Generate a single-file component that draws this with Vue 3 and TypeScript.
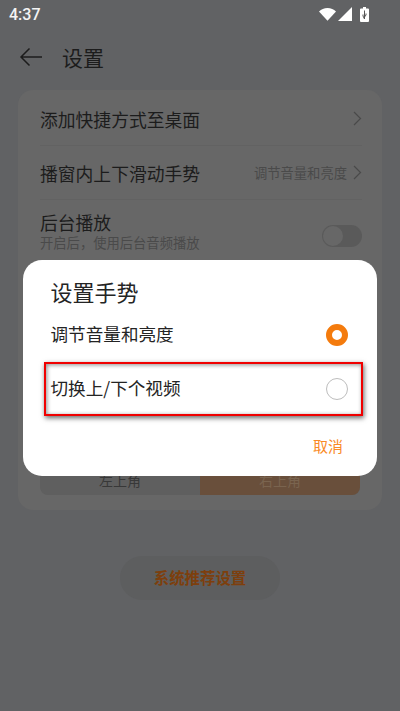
<script setup lang="ts">
const rows = [
  { title: '添加快捷方式至桌面', value: '' },
  { title: '播窗内上下滑动手势', value: '调节音量和亮度' },
]
</script>

<template>
  <div class="page">
    <div class="status">
      <span class="time">4:37</span>
      <div class="status-icons">
        <svg width="17" height="13" viewBox="0 0 17 13"><path d="M0 3.6C2.2 1.3 5.2 0 8.5 0S14.8 1.3 17 3.6L8.5 12.8Z" fill="#fff" /></svg>
        <svg width="14" height="14" viewBox="0 0 14 14"><path d="M14 0V14H0Z" fill="#fff" /></svg>
        <svg class="battery" width="9" height="15" viewBox="0 0 9 15">
          <path d="M3 0H6V1.4H8A1 1 0 0 1 9 2.4V14A1 1 0 0 1 8 15H1A1 1 0 0 1 0 14V2.4A1 1 0 0 1 1 1.4H3Z" fill="#fff" />
          <path d="M4.5 3.5V12M4.5 12L3 9V7.5M4.5 10L6 8V6.5" stroke="#555" stroke-width="1" fill="none" />
        </svg>
      </div>
    </div>

    <header class="top">
      <svg class="back" width="24" height="20" viewBox="0 0 24 20">
        <path d="M23 10H2M10.5 1.5L2 10L10.5 18.5" fill="none" stroke="#1c1c1c" stroke-width="1.5" />
      </svg>
      <h1>设置</h1>
    </header>

    <section class="card">
      <div v-for="row in rows" :key="row.title" class="row">
        <span class="row-title">{{ row.title }}</span>
        <span class="row-end">
          <span v-if="row.value" class="row-value">{{ row.value }}</span>
          <svg width="9" height="15" viewBox="0 0 9 15"><path d="M1 1L7.5 7.5L1 14" fill="none" stroke="#4a4a4a" stroke-width="1.2" /></svg>
        </span>
      </div>
      <div class="row toggle-row">
        <div>
          <div class="row-title">后台播放</div>
          <div class="row-sub">开启后，使用后台音频播放</div>
        </div>
        <div class="toggle"><span class="knob"></span></div>
      </div>
      <div class="hidden-part"></div>
      <div class="segments">
        <div class="seg">左上角</div>
        <div class="seg on">右上角</div>
      </div>
    </section>

    <button class="recommend" type="button">系统推荐设置</button>

    <div class="dialog">
      <h2>设置手势</h2>
      <div class="option">
        <span>调节音量和亮度</span>
        <span class="radio checked"></span>
      </div>
      <div class="option">
        <span>切换上/下个视频</span>
        <span class="radio"></span>
      </div>
      <div class="actions">取消</div>
    </div>

    <div class="highlight"></div>
  </div>
</template>

<style scoped>
.page {
  position: relative;
  width: 400px;
  height: 711px;
  overflow: hidden;
  background: #616264;
  font-family: "Noto Sans CJK SC", "Noto Sans", sans-serif;
  color: #1c1c1c;
}
.status {
  height: 28px;
  display: flex;
  align-items: center;
  justify-content: space-between;
  padding: 0 31px 0 9px;
}
.time {
  font-family: Roboto, sans-serif;
  font-size: 16px;
  font-weight: 500;
  color: #f4f4f4;
}
.status-icons {
  display: flex;
  align-items: center;
  gap: 2px;
}
.battery {
  margin-left: 6px;
}
.top {
  height: 58px;
  display: flex;
  align-items: center;
  gap: 19px;
  padding-left: 19px;
}
.top h1 {
  margin: 0;
  font-size: 21px;
  font-weight: 400;
  line-height: 1;
}
.card {
  height: 420px;
  margin: 4px 18px 0;
  padding: 2px 20px 0 22px;
  box-sizing: border-box;
  background: #676767;
  border-radius: 15px;
  display: flex;
  flex-direction: column;
}
.row {
  height: 53px;
  display: flex;
  align-items: center;
  justify-content: space-between;
  border-bottom: 1px solid #626262;
}
.row-title {
  font-size: 17.8px;
  line-height: 24px;
}
.row-end {
  display: flex;
  align-items: center;
  gap: 6px;
}
.row-value {
  font-size: 13.3px;
  color: #4a4a4a;
}
.toggle-row {
  height: 60px;
  border-bottom: none;
  align-items: flex-start;
  padding-top: 10px;
}
.row-sub {
  font-size: 13.3px;
  line-height: 16px;
  margin-top: 1px;
  color: #4a4a4a;
}
.toggle {
  width: 40px;
  height: 22px;
  margin-top: 15px;
  border-radius: 11px;
  background: #5a5a5a;
  padding: 1px;
  box-sizing: border-box;
}
.knob {
  display: block;
  width: 20px;
  height: 20px;
  border-radius: 50%;
  background: #676767;
}
.hidden-part {
  flex: 1;
}
.segments {
  display: grid;
  grid-template-columns: 1fr 1fr;
  height: 48px;
  margin: 0 2px 15px 0;
  border-radius: 8px;
  overflow: hidden;
  background: #5f5f5f;
  font-size: 14px;
}
.seg {
  display: flex;
  align-items: flex-end;
  justify-content: center;
  padding-bottom: 5px;
  color: #383838;
}
.seg.on {
  background: #694f3b;
  color: #7a644f;
}
.recommend {
  display: block;
  width: 160px;
  height: 44px;
  margin: 46px auto 0;
  border: none;
  border-radius: 22px;
  background: #5d5e5f;
  color: #7d3f0d;
  font-family: inherit;
  font-size: 15.4px;
  font-weight: 700;
  padding: 0 0 3px;
}
.dialog {
  position: absolute;
  left: 23px;
  top: 260px;
  width: 354px;
  height: 216px;
  box-sizing: border-box;
  padding: 16px 28px 0 27.5px;
  background: #fff;
  border-radius: 19px;
  color: #242424;
}
.dialog h2 {
  margin: 0 0 -1px;
  font-size: 22px;
  font-weight: 400;
  line-height: 31px;
}
.option {
  display: flex;
  align-items: center;
  justify-content: space-between;
  height: 54px;
  font-size: 17.6px;
  padding-right: 1px;
}
.radio {
  width: 22px;
  height: 22px;
  margin-top: 3px;
  box-sizing: border-box;
  border: 1px solid #bdbdbd;
  border-radius: 50%;
}
.radio.checked {
  border: 6px solid #f47b0d;
}
.actions {
  text-align: right;
  margin-top: 21px;
  padding-right: 6px;
  font-size: 15px;
  color: #f98a26;
}
.highlight {
  position: absolute;
  left: 44px;
  top: 362px;
  width: 319px;
  height: 54px;
  box-sizing: border-box;
  border: 2.5px solid #f00000;
  box-shadow: 1px 2px 5px rgba(0, 0, 0, 0.6), inset 1px 1px 4px rgba(0, 0, 0, 0.45);
  pointer-events: none;
}
</style>

<style>
html, body {
  margin: 0;
}
</style>
